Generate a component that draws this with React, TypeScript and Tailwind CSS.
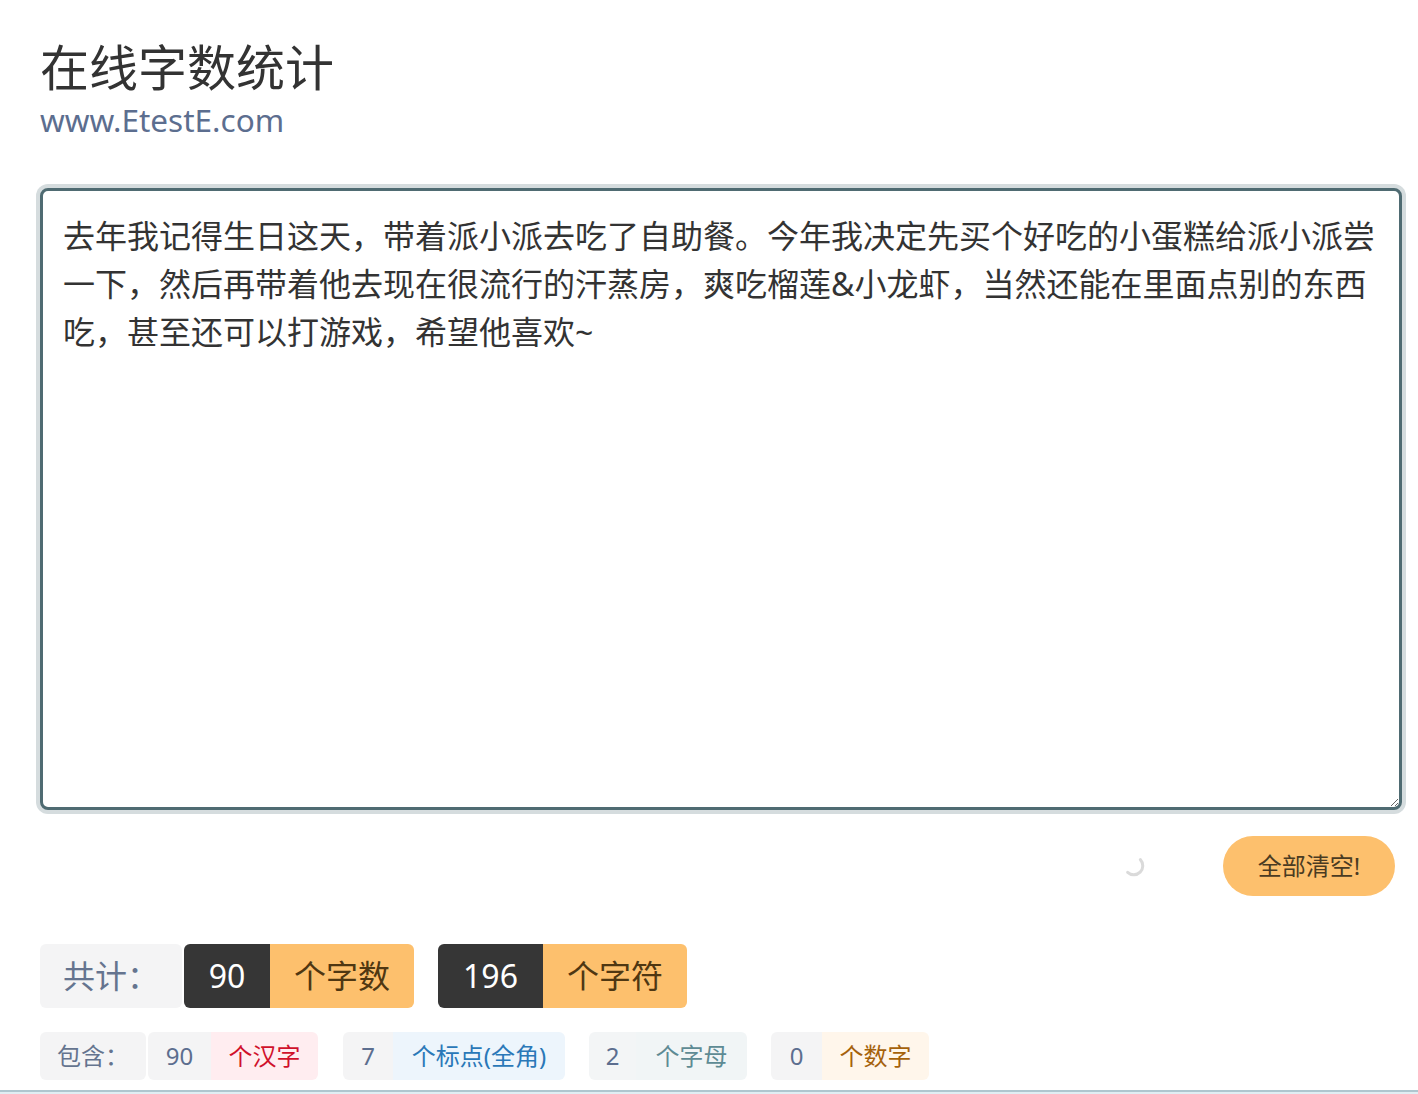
import React from "react";

const sample =
  "去年我记得生日这天，带着派小派去吃了自助餐。今年我决定先买个好吃的小蛋糕给派小派尝一下，然后再带着他去现在很流行的汗蒸房，爽吃榴莲&小龙虾，当然还能在里面点别的东西吃，甚至还可以打游戏，希望他喜欢~";

function Spinner() {
  return (
    <svg width="24" height="24" viewBox="0 0 24 24" fill="none">
      <path
        d="M18.36 5.64 A9 9 0 0 1 5.64 18.36"
        stroke="#dadada"
        strokeWidth="3"
        strokeLinecap="round"
      />
    </svg>
  );
}

function App() {
  const font = "font-['Noto_Sans','Noto_Sans_CJK_SC',sans-serif]";
  return (
    <div className={`${font} min-h-screen bg-white text-[#333]`}>
      <div className="pl-[40px] pr-[16px] pt-[39px]">
        <h1 className="text-[49px] font-normal leading-[56px] text-[#333]">
          在线字数统计
        </h1>
        <p className="mt-[7px] text-[31.5px] leading-[36px] text-[#5c6e8f]">
          www.EtestE.com
        </p>

        <textarea
          defaultValue={sample}
          className="mt-[50px] block h-[622px] w-[1362px] rounded-[8px] border-[3px] border-[#4f6b72] bg-white pl-[20px] pr-[20px] pt-[21px] text-[32px] leading-[48px] text-[#333] shadow-[0_0_0_4px_#d5dcde] outline-none"
        />

        <div className="mt-[26px] flex items-center justify-end pr-[7px]">
          <Spinner />
          <button className="ml-[77px] h-[60px] w-[172px] rounded-full bg-[#fdc06d] text-[24px] text-[#4a3b22]">
            全部清空!
          </button>
        </div>

        <div className="mt-[48px] flex h-[64px] items-stretch text-[32px]">
          <div className="flex w-[142px] items-center justify-center rounded-[6px] bg-[#f4f4f5] text-[#65748f]">
            共计：
          </div>
          <div className="ml-[2px] flex w-[86px] items-center justify-center rounded-l-[6px] bg-[#363636] text-white">
            90
          </div>
          <div className="flex w-[144px] items-center justify-center rounded-r-[6px] bg-[#fdc06d] text-[#4f3712]">
            个字数
          </div>
          <div className="ml-[24px] flex w-[105px] items-center justify-center rounded-l-[6px] bg-[#363636] text-white">
            196
          </div>
          <div className="flex w-[144px] items-center justify-center rounded-r-[6px] bg-[#fdc06d] text-[#4f3712]">
            个字符
          </div>
        </div>

        <div className="mt-[24px] flex h-[48px] items-stretch text-[24px]">
          <div className="flex w-[106px] items-center justify-center rounded-[6px] bg-[#f4f4f5] text-[#65748f]">
            包含：
          </div>
          <div className="ml-[2px] flex w-[63px] items-center justify-center rounded-l-[6px] bg-[#f4f4f5] text-[#5c6e8f]">
            90
          </div>
          <div className="flex w-[107px] items-center justify-center rounded-r-[6px] bg-[#ffedf0] text-[#d0112b]">
            个汉字
          </div>
          <div className="ml-[25px] flex w-[50px] items-center justify-center rounded-l-[6px] bg-[#f4f4f5] text-[#5c6e8f]">
            7
          </div>
          <div className="flex w-[172px] items-center justify-center rounded-r-[6px] bg-[#edf5fc] text-[#2a78b8]">
            个标点(全角)
          </div>
          <div className="ml-[24px] flex w-[47px] items-center justify-center rounded-l-[6px] bg-[#f3f5f6] text-[#5c6e8f]">
            2
          </div>
          <div className="flex w-[111px] items-center justify-center rounded-r-[6px] bg-[#f1f5f6] text-[#5e8b94]">
            个字母
          </div>
          <div className="ml-[24px] flex w-[51px] items-center justify-center rounded-l-[6px] bg-[#f4f4f5] text-[#5c6e8f]">
            0
          </div>
          <div className="flex w-[107px] items-center justify-center rounded-r-[6px] bg-[#fff6eb] text-[#a5620b]">
            个数字
          </div>
        </div>
      </div>

      <div className="mt-[10px] h-[80px] border-t-2 border-[#afc6cf] bg-[#e0eef3]" />
    </div>
  );
}

export default App;
